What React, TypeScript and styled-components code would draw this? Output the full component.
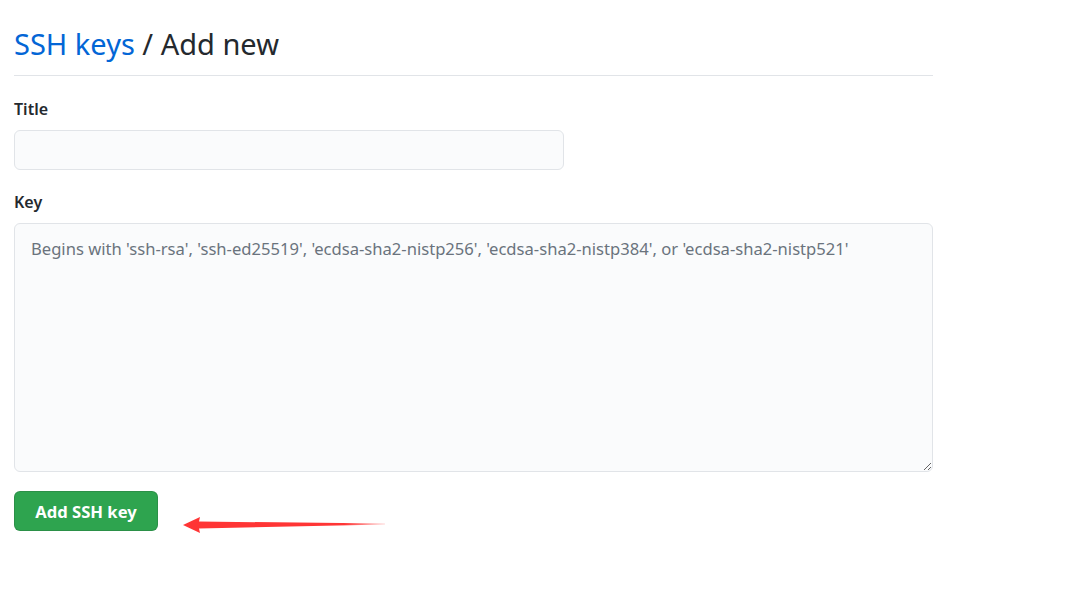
import React from "react";
import styled, { createGlobalStyle } from "styled-components";

const Global = createGlobalStyle`
  html, body { margin: 0; padding: 0; background: #fff; }
  body { font-family: "Noto Sans", "Open Sans", sans-serif; color: #24292e; }
`;

const Page = styled.div`
  width: 919px;
  padding: 22px 0 0 14px;
  display: flex;
  flex-direction: column;
`;

const Header = styled.h2`
  margin: 0;
  padding-bottom: 10px;
  border-bottom: 1px solid #e1e4e8;
  font-size: 29px;
  font-weight: 400;
  line-height: 43px;
  color: #24292e;
`;

const Crumb = styled.a`
  color: #0366d6;
  text-decoration: none;
`;

const Form = styled.form`
  display: flex;
  flex-direction: column;
  padding-top: 20px;
`;

const Field = styled.div`
  display: flex;
  flex-direction: column;
  margin-bottom: 19px;
`;

const Label = styled.label`
  font-size: 16px;
  font-weight: 600;
  line-height: 26px;
  margin-bottom: 8px;
`;

const Input = styled.input`
  box-sizing: border-box;
  width: 550px;
  height: 40px;
  border: 1px solid #e1e4e8;
  border-radius: 6px;
  background: #fafbfc;
  outline: none;
`;

const Textarea = styled.textarea<{ $h: number }>`
  box-sizing: border-box;
  width: 919px;
  height: ${(p) => p.$h}px;
  border: 1px solid #e1e4e8;
  border-radius: 6px;
  background: #fafbfc;
  padding: 12px 16px;
  font-family: inherit;
  font-size: 16.6px;
  line-height: 26px;
  color: #24292e;
  outline: none;
  &::placeholder { color: #6a737d; }
`;

const Actions = styled.div`
  display: flex;
  align-items: flex-start;
  gap: 24px;
`;

const Button = styled.button`
  width: 144px;
  height: 40px;
  background: #2ea44f;
  border: 1px solid rgba(27, 31, 35, 0.15);
  border-radius: 6px;
  color: #fff;
  font-family: inherit;
  font-size: 16.6px;
  font-weight: 700;
  cursor: pointer;
`;

const Arrow = styled.svg`
  display: block;
  margin-top: 25px;
`;

export default function App() {
  return (
    <>
      <Global />
      <Page>
        <Header>
          <Crumb href="#">SSH keys</Crumb> / Add new
        </Header>
        <Form>
          <Field>
            <Label>Title</Label>
            <Input type="text" />
          </Field>
          <Field>
            <Label>Key</Label>
            <Textarea
              $h={249}
              placeholder="Begins with 'ssh-rsa', 'ssh-ed25519', 'ecdsa-sha2-nistp256', 'ecdsa-sha2-nistp384', or 'ecdsa-sha2-nistp521'"
            />
          </Field>
          <Actions>
            <Button type="button">Add SSH key</Button>
            <Arrow width="205" height="18" viewBox="0 0 205 18">
              <defs>
                <linearGradient id="fade" x1="0" x2="1" y1="0" y2="0">
                  <stop offset="0" stopColor="#ff3535" />
                  <stop offset="0.8" stopColor="#ff3535" />
                  <stop offset="1" stopColor="#ff3535" stopOpacity="0.2" />
                </linearGradient>
              </defs>
              <path d="M1 9 L18 1 L17 5.5 L203 7.6 L203 8.4 L17 12.5 L18 17 Z" fill="url(#fade)" />
            </Arrow>
          </Actions>
        </Form>
      </Page>
    </>
  );
}
